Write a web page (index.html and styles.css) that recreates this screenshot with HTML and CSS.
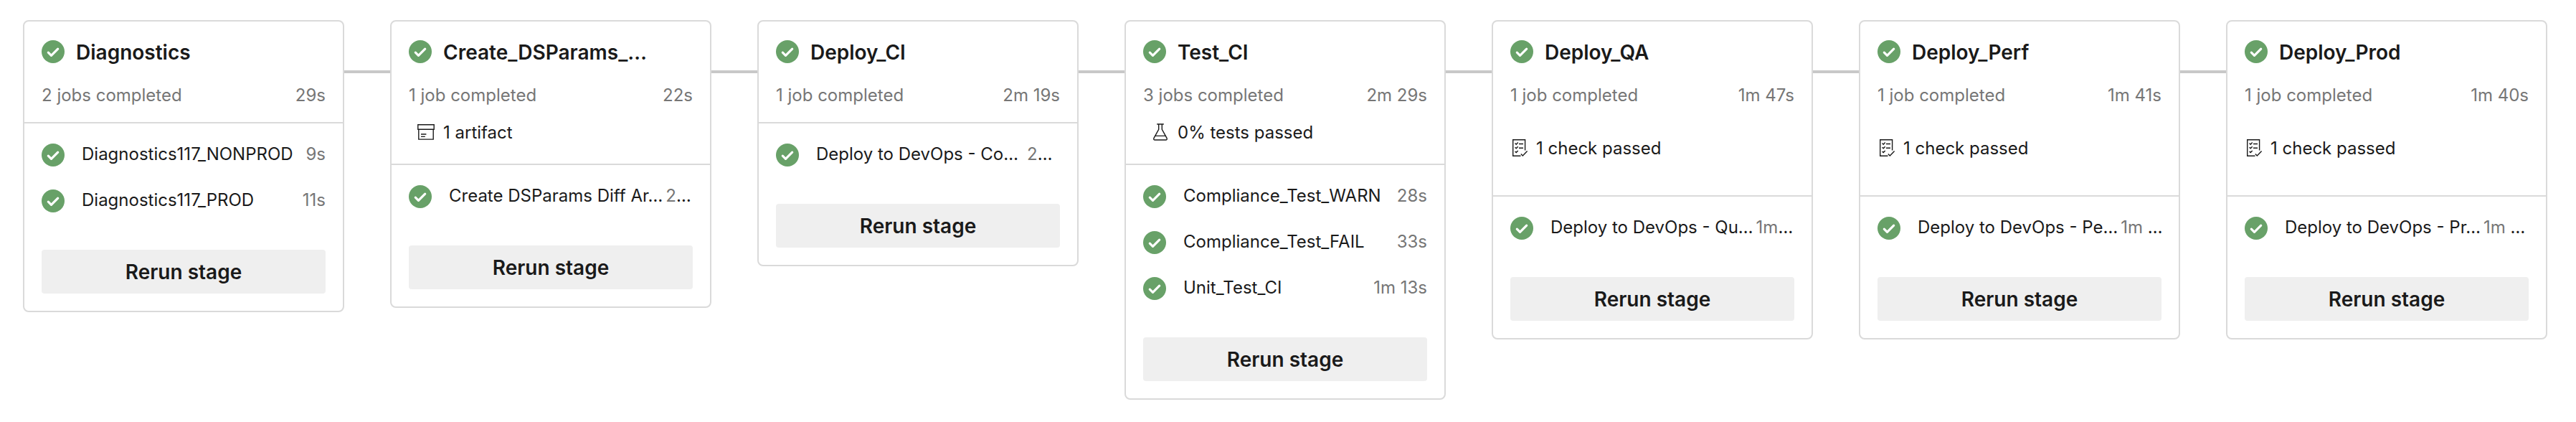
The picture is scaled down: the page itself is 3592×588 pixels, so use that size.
FILE: index.html
```html
<!DOCTYPE html>
<html lang="en">
<head>
<meta charset="utf-8">
<title>Pipeline stages</title>
<link rel="stylesheet" href="styles.css">
</head>
<body>
<svg class="sprite" aria-hidden="true">
  <symbol id="success" viewBox="0 0 32 32">
    <circle cx="16" cy="16" r="16" fill="#68a168"/>
    <path d="M9.3 17.2l4.2 4.1 9.2-9.2" fill="none" stroke="#fff" stroke-width="3.2" stroke-linecap="round" stroke-linejoin="round"/>
  </symbol>
  <symbol id="artifact" viewBox="0 0 24 24">
    <path d="M.8 1.8h22.4v6.4H.8zM1.8 8.2v13.9h20.4V8.2M5 15h7.4M5 18.4h5.8" fill="none" stroke="currentColor" stroke-width="1.4"/>
  </symbol>
  <symbol id="flask" viewBox="0 0 24 24">
    <path d="M7.2 1h9.6M9.7 1v7.4L2.9 20.6Q2.2 23 4.4 23h15.2q2.2 0 1.5-2.4L14.3 8.4V1M5 17.4h14" fill="none" stroke="currentColor" stroke-width="1.4"/>
  </symbol>
  <symbol id="checklist" viewBox="0 0 28 28">
    <path d="M20.6 17.5V2.7H3.7v22.6h10.8" fill="none" stroke="currentColor" stroke-width="1.4"/>
    <path d="M14.8 22.4l2.5 2.5 6.3-6.5M6.6 7.6l1.6 1.6 2.5-2.6M6.6 13.2l1.6 1.6 2.5-2.6M6.6 19l1.6 1.6 2.5-2.6M12 8.5h6M12 14.2h6" fill="none" stroke="currentColor" stroke-width="1.4"/>
  </symbol>
</svg>
<main class="pipeline">
  <section class="stage">
    <header class="stage-head">
      <div class="stage-title"><svg class="status"><use href="#success"/></svg><h2>Diagnostics</h2></div>
      <div class="summary"><span>2 jobs completed</span><span>29s</span></div>
    </header>
    <div class="stage-body">
      <ul class="jobs">
        <li class="job"><svg class="status"><use href="#success"/></svg><span class="job-name">Diagnostics117_NONPROD</span><span class="time">9s</span></li>
        <li class="job"><svg class="status"><use href="#success"/></svg><span class="job-name">Diagnostics117_PROD</span><span class="time">11s</span></li>
      </ul>
      <button class="rerun" type="button">Rerun stage</button>
    </div>
  </section>
  <div class="connector"></div>
  <section class="stage">
    <header class="stage-head">
      <div class="stage-title"><svg class="status"><use href="#success"/></svg><h2>Create_DSParams_…</h2></div>
      <div class="summary"><span>1 job completed</span><span>22s</span></div>
      <div class="extra"><svg class="extra-icon"><use href="#artifact"/></svg><span>1 artifact</span></div>
    </header>
    <div class="stage-body">
      <ul class="jobs">
        <li class="job clipped"><svg class="status"><use href="#success"/></svg><span class="job-name">Create DSParams Diff Ar…</span><span class="time">2<span class="dots">…</span></span></li>
      </ul>
      <button class="rerun" type="button">Rerun stage</button>
    </div>
  </section>
  <div class="connector"></div>
  <section class="stage">
    <header class="stage-head">
      <div class="stage-title"><svg class="status"><use href="#success"/></svg><h2>Deploy_CI</h2></div>
      <div class="summary"><span>1 job completed</span><span>2m 19s</span></div>
    </header>
    <div class="stage-body">
      <ul class="jobs">
        <li class="job clipped roomy"><svg class="status"><use href="#success"/></svg><span class="job-name">Deploy to DevOps - Co…</span><span class="time">2<span class="dots">…</span></span></li>
      </ul>
      <button class="rerun" type="button">Rerun stage</button>
    </div>
  </section>
  <div class="connector"></div>
  <section class="stage">
    <header class="stage-head">
      <div class="stage-title"><svg class="status"><use href="#success"/></svg><h2>Test_CI</h2></div>
      <div class="summary"><span>3 jobs completed</span><span>2m 29s</span></div>
      <div class="extra"><svg class="extra-icon"><use href="#flask"/></svg><span>0% tests passed</span></div>
    </header>
    <div class="stage-body">
      <ul class="jobs">
        <li class="job"><svg class="status"><use href="#success"/></svg><span class="job-name">Compliance_Test_WARN</span><span class="time">28s</span></li>
        <li class="job"><svg class="status"><use href="#success"/></svg><span class="job-name">Compliance_Test_FAIL</span><span class="time">33s</span></li>
        <li class="job"><svg class="status"><use href="#success"/></svg><span class="job-name">Unit_Test_CI</span><span class="time">1m 13s</span></li>
      </ul>
      <button class="rerun" type="button">Rerun stage</button>
    </div>
  </section>
  <div class="connector"></div>
  <section class="stage">
    <header class="stage-head">
      <div class="stage-title"><svg class="status"><use href="#success"/></svg><h2>Deploy_QA</h2></div>
      <div class="summary"><span>1 job completed</span><span>1m 47s</span></div>
      <div class="checks"><svg class="checks-icon"><use href="#checklist"/></svg><span>1 check passed</span></div>
    </header>
    <div class="stage-body">
      <ul class="jobs">
        <li class="job clipped"><svg class="status"><use href="#success"/></svg><span class="job-name">Deploy to DevOps - Qu…</span><span class="time">1m<span class="dots">…</span></span></li>
      </ul>
      <button class="rerun" type="button">Rerun stage</button>
    </div>
  </section>
  <div class="connector"></div>
  <section class="stage">
    <header class="stage-head">
      <div class="stage-title"><svg class="status"><use href="#success"/></svg><h2>Deploy_Perf</h2></div>
      <div class="summary"><span>1 job completed</span><span>1m 41s</span></div>
      <div class="checks"><svg class="checks-icon"><use href="#checklist"/></svg><span>1 check passed</span></div>
    </header>
    <div class="stage-body">
      <ul class="jobs">
        <li class="job clipped"><svg class="status"><use href="#success"/></svg><span class="job-name">Deploy to DevOps - Pe…</span><span class="time">1m <span class="dots">…</span></span></li>
      </ul>
      <button class="rerun" type="button">Rerun stage</button>
    </div>
  </section>
  <div class="connector"></div>
  <section class="stage">
    <header class="stage-head">
      <div class="stage-title"><svg class="status"><use href="#success"/></svg><h2>Deploy_Prod</h2></div>
      <div class="summary"><span>1 job completed</span><span>1m 40s</span></div>
      <div class="checks"><svg class="checks-icon"><use href="#checklist"/></svg><span>1 check passed</span></div>
    </header>
    <div class="stage-body">
      <ul class="jobs">
        <li class="job clipped"><svg class="status"><use href="#success"/></svg><span class="job-name">Deploy to DevOps - Pr…</span><span class="time">1m <span class="dots">…</span></span></li>
      </ul>
      <button class="rerun" type="button">Rerun stage</button>
    </div>
  </section>
</main>
</body>
</html>
```
FILE: styles.css
```css
* { box-sizing: border-box; }

body {
  margin: 0;
  background: #fff;
  color: #1a1a1a;
  font-family: Inter, "Liberation Sans", sans-serif;
  font-size: 24px;
  line-height: 34px;
}

.sprite { display: none; }

.pipeline {
  display: flex;
  align-items: flex-start;
  padding: 28px 40px 28px 32px;
}

.stage {
  flex: 1;
  min-width: 0;
  border: 2px solid #dadada;
  border-radius: 8px;
}

.connector {
  flex: 0 0 64px;
  height: 4px;
  margin-top: 70px;
  background: #c8c8c8;
}

.stage-head {
  padding: 26px 24px 20px;
  border-bottom: 2px solid #dadada;
}

.stage-title {
  display: flex;
  gap: 16px;
}

.stage-title h2 {
  margin: 0;
  font-size: 28px;
  font-weight: 600;
  white-space: nowrap;
}

.status {
  flex: none;
  width: 32px;
  height: 32px;
}

.summary {
  display: flex;
  justify-content: space-between;
  margin-top: 26px;
  color: #767676;
  white-space: nowrap;
}

.extra {
  display: flex;
  gap: 12px;
  margin: 18px 0 6px 12px;
}

.extra-icon {
  width: 24px;
  height: 24px;
  margin-top: 4px;
}

.checks {
  display: flex;
  gap: 8px;
  margin: 40px 0 28px;
}

.checks-icon {
  width: 28px;
  height: 28px;
  margin-top: 2px;
}

.stage-body { padding: 28px 24px 24px; }

.jobs {
  display: flex;
  flex-direction: column;
  gap: 32px;
  margin: 0;
  padding: 0;
  list-style: none;
}

.job {
  display: flex;
  line-height: 30px;
  white-space: nowrap;
}

.job-name {
  flex: 1;
  margin-left: 24px;
}

.clipped .job-name {
  flex: none;
  margin-right: 4px;
}

.roomy .job-name { margin-right: 12px; }

.time { color: #767676; }
.dots { color: #1a1a1a; }

.rerun {
  display: block;
  width: 100%;
  margin-top: 52px;
  padding: 15px 14px 13px;
  border: 0;
  border-radius: 4px;
  background: #efefef;
  color: inherit;
  font: 600 28px/33px Inter, "Liberation Sans", sans-serif;
}
```
